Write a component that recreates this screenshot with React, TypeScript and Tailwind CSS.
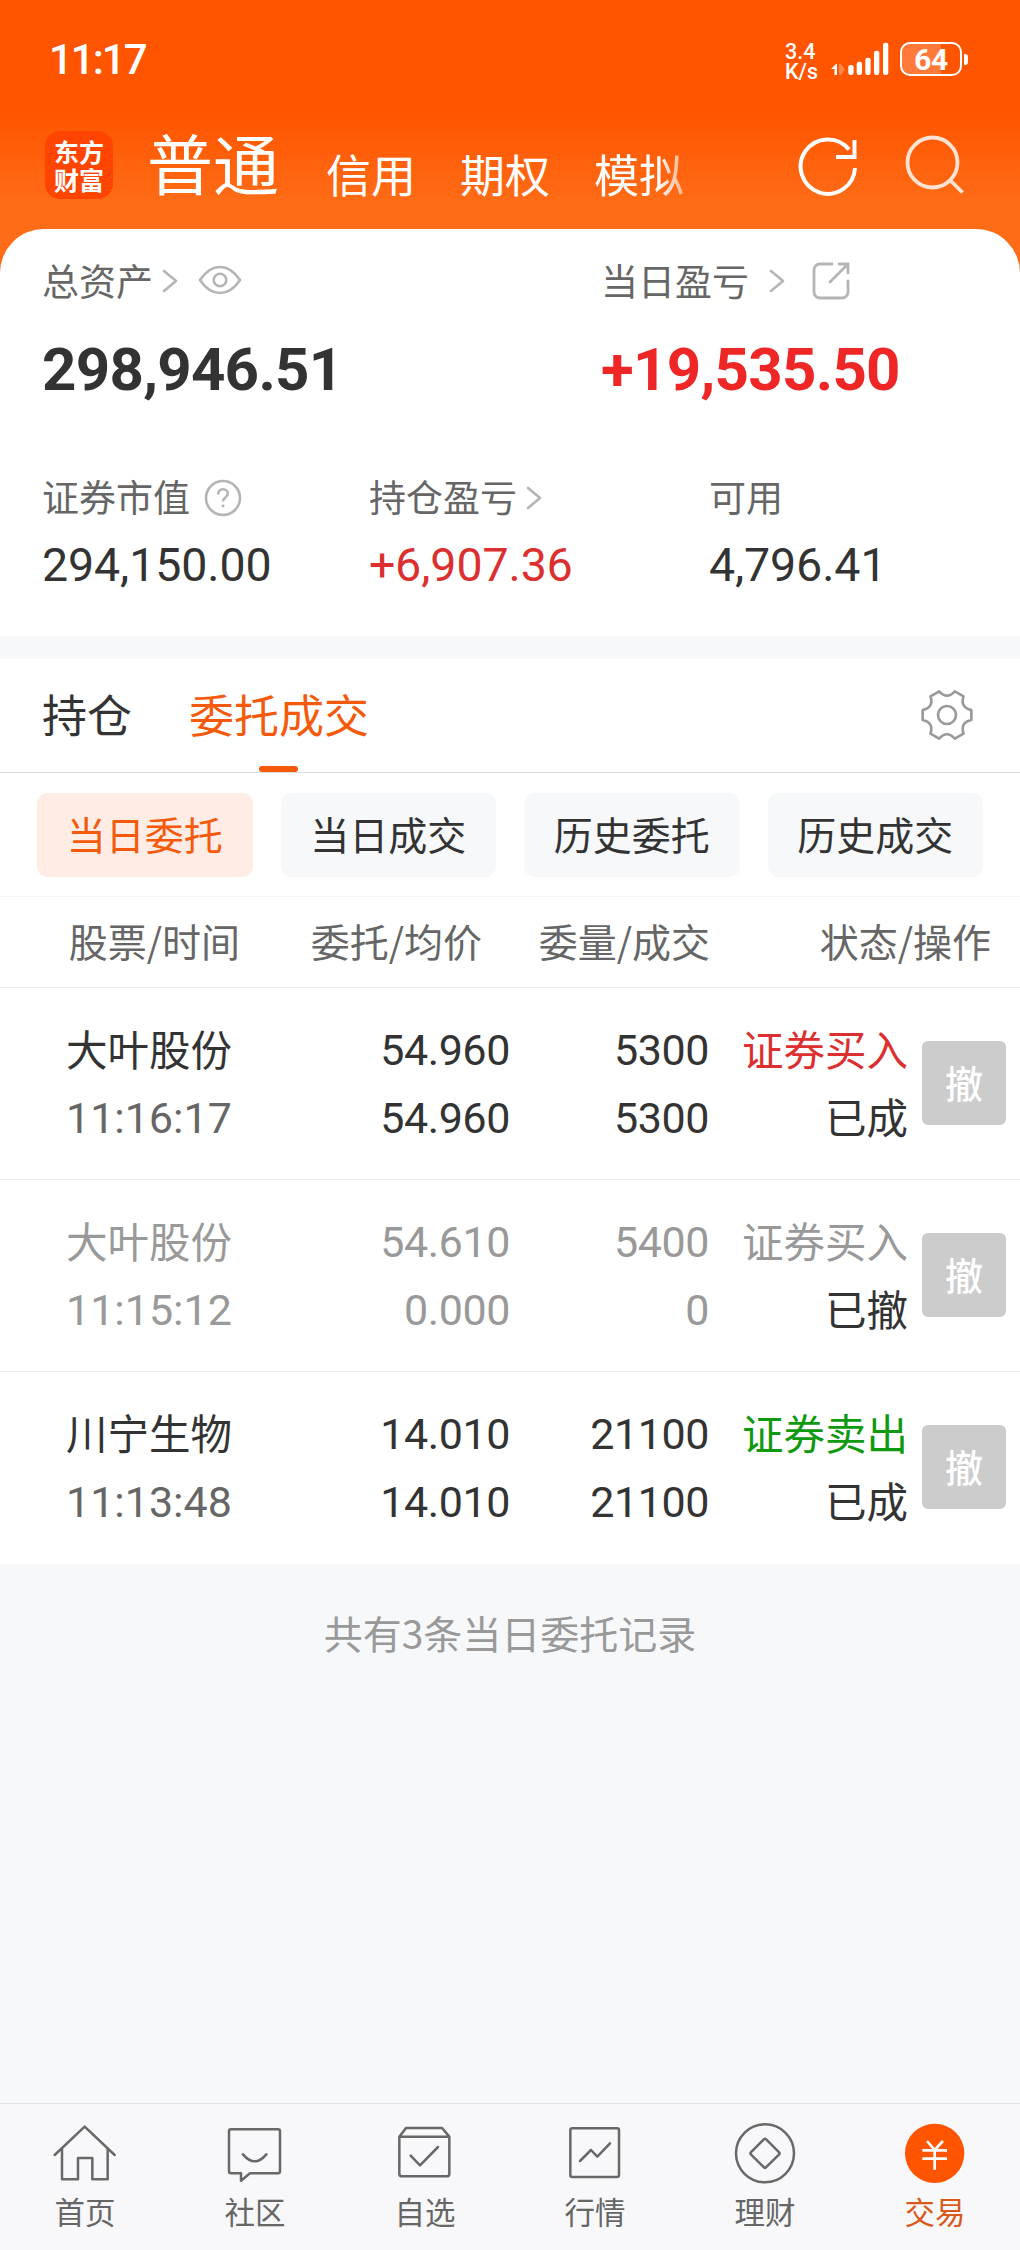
import React from 'react';

type Side = 'buy' | 'sell';

interface Order {
  name: string;
  time: string;
  price: string;
  avgPrice: string;
  qty: string;
  dealQty: string;
  side: Side;
  status: string;
  cancelled?: boolean;
}

const orders: Order[] = [
  { name: '大叶股份', time: '11:16:17', price: '54.960', avgPrice: '54.960', qty: '5300', dealQty: '5300', side: 'buy', status: '已成' },
  { name: '大叶股份', time: '11:15:12', price: '54.610', avgPrice: '0.000', qty: '5400', dealQty: '0', side: 'buy', status: '已撤', cancelled: true },
  { name: '川宁生物', time: '11:13:48', price: '14.010', avgPrice: '14.010', qty: '21100', dealQty: '21100', side: 'sell', status: '已成' },
];

const filters = ['当日委托', '当日成交', '历史委托', '历史成交'];

const num = "font-['Roboto',sans-serif] tabular-nums";

const Chevron = ({ className = '' }: { className?: string }) => (
  <svg width="16" height="26" viewBox="0 0 16 26" fill="none" stroke="#b5b5b5" strokeWidth="2.6" strokeLinecap="round" strokeLinejoin="round" className={className}>
    <path d="M2 3l12 10L2 23" />
  </svg>
);

const StatusBar = () => (
  <div className="h-[120px] flex items-start justify-between pl-[49px] pr-[52px] text-white">
    <div className={`${num} mt-[36px] text-[42px] leading-[48px] font-medium tracking-[-2px]`}>11:17</div>
    <div className="flex items-start mt-[42px]">
      <div className={`${num} w-[40px] mr-[6px] text-[21.5px] leading-[20px] font-medium`}>
        <div>3.4</div>
        <div>K/s</div>
      </div>
      <svg width="59" height="34" viewBox="0 0 59 34" className="mr-[10px]">
        <path d="M0 27l5-5h1v11H3.500v-6z" fill="#fff" />
        <path d="M8 22h2l4 6-4 5H8z" fill="#fff" opacity="0.3" />
        <rect x="17.300" y="23" width="5.300" height="10" rx="2.200" fill="#fff" />
        <rect x="25.700" y="19.700" width="5.300" height="13.300" rx="2.200" fill="#fff" />
        <rect x="34.300" y="15.700" width="5.300" height="17.300" rx="2.200" fill="#fff" />
        <rect x="43" y="8.700" width="5.300" height="24.300" rx="2.200" fill="#fff" />
        <rect x="52" y="0.700" width="5.300" height="32.300" rx="2.200" fill="#fff" />
      </svg>
      <div className="w-[62px] h-[34px] rounded-[10px] border-2 border-white bg-[linear-gradient(90deg,#ff7a3a_68%,transparent_68%)]">
        <div className={`${num} text-[30px] leading-[31px] text-center font-bold tracking-[-0.5px]`}>64</div>
      </div>
      <div className="w-[4px] h-[11px] mt-[12px] ml-[2px] rounded-r-[3px] rounded-l-[1px] bg-white" />
    </div>
  </div>
);

const TopNav = () => (
  <div className="h-[109px] flex items-start pl-[45px] pr-[55px] text-white">
    <div className="w-[68px] h-[68px] mt-[11px] rounded-[15px] bg-[#ff4500] grid place-content-center font-bold text-[25px] leading-[28px]">
      <span>东方</span>
      <span>财富</span>
    </div>
    <div className="flex items-start ml-[34px] text-[45px] whitespace-nowrap">
      <span className="text-[66px] leading-[83px] mr-[47px]">普通</span>
      <span className="mt-[24px] leading-[60px] mr-[44px]">信用</span>
      <span className="mt-[24px] leading-[60px] mr-[44px]">期权</span>
      <span className="mt-[24px] leading-[60px] [mask-image:linear-gradient(90deg,#000_70%,rgba(0,0,0,0.5)_100%)]">模拟</span>
    </div>
    <svg width="60" height="60" viewBox="0 0 60 60" fill="none" stroke="#fff" strokeWidth="4" className="ml-auto mt-[16px]">
      <path d="M57 32a27.200 27.200 0 1 1-6-18.500" />
      <path d="M56.500 4v17H38" />
    </svg>
    <svg width="60" height="60" viewBox="0 0 60 60" fill="none" stroke="#ffe3d3" strokeWidth="3.800" className="ml-[47px] mt-[15px]">
      <circle cx="27.500" cy="27.500" r="25" />
      <path d="M45 45l12.500 12.500" />
    </svg>
  </div>
);

const Label = ({ text, children }: { text: string; children?: React.ReactNode }) => (
  <div className="flex items-center h-[50px] text-[37px] leading-[50px] text-[#666]">
    <span className="-mt-[3px]">{text}</span>
    {children}
  </div>
);

const bigValue = `${num} mt-[29px] text-[60px] leading-[70px] font-bold tracking-[-0.7px]`;
const value = `${num} mt-[15px] text-[46.5px] leading-[56px] tracking-[-0.1px]`;

const Summary = () => (
  <div className="h-[407px] bg-white rounded-t-[44px] pt-[27px] pl-[42px]">
    <div className="flex">
      <div className="w-[559px]">
        <Label text="总资产">
          <Chevron className="ml-[9px]" />
          <svg width="44" height="32" viewBox="0 0 44 32" fill="none" stroke="#b5b5b5" strokeWidth="2.600" className="ml-[20px] -mt-[2px]">
            <path d="M2 16C8 7 14.500 3 22 3s14 4 20 13c-6 9-12.500 13-20 13S8 25 2 16z" strokeLinejoin="round" />
            <circle cx="22" cy="16" r="6.300" />
          </svg>
        </Label>
        <div className={`${bigValue} text-[#333]`}>298,946.51</div>
      </div>
      <div>
        <Label text="当日盈亏">
          <Chevron className="ml-[20px]" />
          <svg width="38" height="38" viewBox="0 0 38 38" fill="none" stroke="#b5b5b5" strokeWidth="2.800" className="ml-[27px]" strokeLinecap="round">
            <path d="M20 2H8a6 6 0 0 0-6 6v22a6 6 0 0 0 6 6h22a6 6 0 0 0 6-6V19" />
            <path d="M27 2h9v9M36 2L18 20" />
          </svg>
        </Label>
        <div className={`${bigValue} text-[#ee2626]`}>+19,535.50</div>
      </div>
    </div>
    <div className="flex mt-[67px]">
      <div className="w-[327px]">
        <Label text="证券市值">
          <svg width="38" height="38" viewBox="0 0 38 38" fill="none" stroke="#b5b5b5" strokeWidth="2.600" className="ml-[14px] mt-[2px]">
            <circle cx="19" cy="19" r="17" />
            <path d="M14.200 15.500c0-3.200 2-5.200 4.800-5.200s4.800 1.800 4.800 4.500c0 3.600-4.800 4-4.800 7.700" />
            <circle cx="19" cy="27" r="1.400" fill="#b5b5b5" stroke="none" />
          </svg>
        </Label>
        <div className={`${value} text-[#333]`}>294,150.00</div>
      </div>
      <div className="w-[340px]">
        <Label text="持仓盈亏">
          <Chevron className="ml-[9px] mt-[2px]" />
        </Label>
        <div className={`${value} text-[#dc2f2f]`}>+6,907.36</div>
      </div>
      <div>
        <Label text="可用" />
        <div className={`${value} text-[#333]`}>4,796.41</div>
      </div>
    </div>
  </div>
);

const Tabs = () => (
  <div className="h-[114px] mt-[23px] bg-white border-b border-[#dedede] flex items-start pl-[42px] pr-[46px] text-[45px] leading-[60px]">
    <div className="mt-[25px] text-[#333]">持仓</div>
    <div className="relative ml-[57px] h-[113px] pt-[25px] text-[#f55a0c]">
      委托成交
      <div className="absolute bottom-0 left-1/2 -ml-[20px] w-[39px] h-[6px] rounded-full bg-[#f55a0c]" />
    </div>
    <svg width="54" height="54" viewBox="-81 -81 162 162" fill="none" stroke="#999" strokeWidth="8" strokeLinejoin="round" className="ml-auto mt-[29px]">
      <path d="M73-15V15Q39 22.500 49.500 55.700L23.500 70.700Q0 45-23.500 70.700L-49.500 55.700Q-39 22.500-73 15V-15Q-39-22.500-49.500-55.700L-23.500-70.700Q0-45 23.500-70.700L49.500-55.700Q39-22.500 73-15z" />
      <circle r="27" />
    </svg>
  </div>
);

const Filters = () => (
  <div className="h-[124px] bg-white border-b border-[#f5f5f6] pt-[20px] px-[37px] flex gap-[28px] text-[39px] leading-[81px] text-center">
    {filters.map((f, i) => (
      <div key={f} className={`flex-1 h-[84px] rounded-[11px] ${i === 0 ? 'bg-[#ffede5] text-[#f55a0c]' : 'bg-[#f7f8fa] text-[#333]'}`}>
        {f}
      </div>
    ))}
  </div>
);

const cols = 'grid grid-cols-[242px_268px_199px_199px_1fr]';

const OrderRow = ({ order }: { order: Order }) => {
  const main = order.cancelled ? 'text-[#999]' : 'text-[#333]';
  const sub = order.cancelled ? 'text-[#999]' : 'text-[#666]';
  const sideColor = order.cancelled ? 'text-[#999]' : order.side === 'buy' ? 'text-[#dc2f2f]' : 'text-[#0f990f]';
  return (
    <div className={`${cols} h-[192px] items-start pt-[28px] border-b border-[#ebebeb] last:border-b-0 text-[41.5px] leading-[68px]`}>
      <div className="pl-[66px] whitespace-nowrap">
        <div className={`${main} -mt-[2px] mb-[2px]`}>{order.name}</div>
        <div className={`${num} ${sub} text-[43px]`}>{order.time}</div>
      </div>
      <div className={`${num} ${main} text-right text-[43px] tracking-[-0.4px]`}>
        <div>{order.price}</div>
        <div>{order.avgPrice}</div>
      </div>
      <div className={`${num} ${main} text-right text-[43px] tracking-[-0.4px]`}>
        <div>{order.qty}</div>
        <div>{order.dealQty}</div>
      </div>
      <div className="-mt-[2px] text-right whitespace-nowrap">
        <div className={sideColor}>{order.side === 'buy' ? '证券买入' : '证券卖出'}</div>
        <div className="text-[#333]">{order.status}</div>
      </div>
      <button className="w-[84px] h-[84px] ml-[14px] mt-[25px] pb-[3px] rounded-[6px] bg-[#ccc] text-white text-[38px] leading-[81px] font-medium">撤</button>
    </div>
  );
};

const Orders = () => (
  <div className="bg-white">
    <div className="h-[91px] border-b border-[#ebebeb] flex text-[39px] leading-[87px] text-[#666] whitespace-nowrap">
      <div className="w-[240px] text-right">股票/时间</div>
      <div className="w-[242px] text-right">委托/均价</div>
      <div className="w-[228px] text-right">委量/成交</div>
      <div className="w-[281px] text-right">状态/操作</div>
    </div>
    {orders.map((o) => (
      <OrderRow key={o.time} order={o} />
    ))}
  </div>
);

const navItems = [
  {
    name: '首页',
    icon: (
      <>
        <path d="M5 105L95 20l90 85" />
        <path d="M27 88v90h48v-64h43v64h46V88" />
      </>
    ),
  },
  {
    name: '社区',
    icon: (
      <>
        <path d="M24 28h141a6 6 0 0 1 6 6v120a6 6 0 0 1-6 6H81l-27 22v-22H24a6 6 0 0 1-6-6V34a6 6 0 0 1 6-6z" />
        <path d="M60 103q35 42 70 0" />
      </>
    ),
  },
  {
    name: '自选',
    icon: (
      <>
        <path d="M19 50l20-26h108l22 26v111a8 8 0 0 1-8 8H27a8 8 0 0 1-8-8zM19 50h150" />
        <path d="M53 107l28 29 54-55" />
      </>
    ),
  },
  {
    name: '行情',
    icon: (
      <>
        <rect x="22" y="25" width="146" height="146" rx="6" />
        <path d="M51 123l33-33 19 20 38-40" />
      </>
    ),
  },
  {
    name: '理财',
    icon: (
      <>
        <circle cx="96" cy="100" r="87" />
        <rect x="64" y="68" width="64" height="64" rx="4" transform="rotate(45 96 100)" />
      </>
    ),
  },
  {
    name: '交易',
    active: true,
    icon: (
      <>
        <circle cx="95" cy="100" r="89" fill="#ff5500" stroke="none" />
        <path d="M72 63l23 27 25-27M58 91h74M58 116h74M95 90v59" stroke="#fff" strokeWidth="8" strokeLinecap="butt" />
      </>
    ),
  },
];

const BottomNav = () => (
  <div className="h-[147px] mt-auto border-t border-[#e3e3e5] bg-[#f8f8fa] grid grid-cols-6 pt-[16px]">
    {navItems.map((item) => (
      <div key={item.name} className={`flex flex-col items-center text-[30.5px] leading-[40px] ${item.active ? 'text-[#d9581a]' : 'text-[#666]'}`}>
        <svg width="64" height="64" viewBox="0 0 192 192" fill="none" stroke="#686868" strokeWidth="7.500" strokeLinecap="round" strokeLinejoin="round">
          {item.icon}
        </svg>
        <span className="mt-[7px]">{item.name}</span>
      </div>
    ))}
  </div>
);

export default function App() {
  return (
    <div className="w-[1020px] h-[2250px] flex flex-col bg-[#f7f8fa] font-['Noto_Sans_CJK_SC',sans-serif] overflow-hidden">
      <div className="bg-[linear-gradient(180deg,#ff5500_115px,#ff6c17_205px)]">
        <StatusBar />
        <TopNav />
        <Summary />
      </div>
      <Tabs />
      <Filters />
      <Orders />
      <div className="mt-[38px] text-center text-[39px] leading-[60px] text-[#999]">共有3条当日委托记录</div>
      <BottomNav />
    </div>
  );
}
